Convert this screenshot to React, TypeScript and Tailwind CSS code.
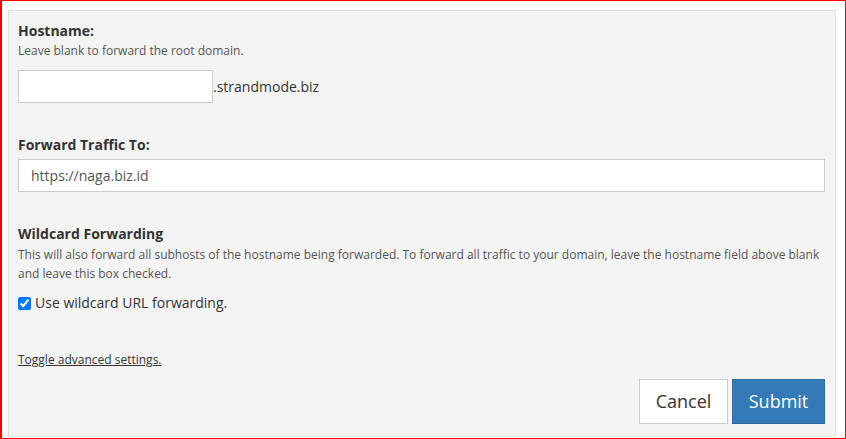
import React from 'react';

const App: React.FC = () => {
  return (
    <div className="w-[846px] h-[439px] bg-white border border-l-2 border-[#ff0000] pl-[6px] pr-[9px] pt-[9px] pb-[1px] font-['Open_Sans',sans-serif] text-[#333]">
      <div className="h-full bg-[#f4f4f4] border border-[#e2e2e2] pl-[9px] pr-[10px] pt-[10px] flex flex-col">
        <div className="text-[14px] font-bold leading-[20px] text-[#333]">Hostname:</div>
        <div className="text-[12px] leading-[17px] text-[#555] mt-[1px]">Leave blank to forward the root domain.</div>
        <div className="flex items-center mt-[11px]">
          <input type="text" className="w-[195px] h-[33px] bg-white border border-[#ccc] outline-none" />
          <span className="text-[14px] text-[#333]">.strandmode.biz</span>
        </div>

        <div className="text-[14px] font-bold leading-[20px] mt-[32px]">Forward Traffic To:</div>
        <input
          type="text"
          defaultValue="https://naga.biz.id"
          className="mt-[4px] w-full h-[33px] bg-white border border-[#ccc] px-[12px] text-[14px] text-[#555] outline-none"
        />

        <div className="text-[14px] font-bold leading-[20px] mt-[32px]">Wildcard Forwarding</div>
        <p className="text-[12px] leading-[19px] text-[#555] mt-[1px] pr-[4px]">
          This will also forward all subhosts of the hostname being forwarded. To forward all traffic to your domain, leave the hostname field above blank and leave this box checked.
        </p>
        <label className="flex items-center gap-[4px] mt-[10px] text-[14px] leading-[20px]">
          <input type="checkbox" defaultChecked className="w-[13px] h-[13px] m-0 accent-[#0075ff]" />
          <span>Use wildcard URL forwarding.</span>
        </label>

        <a href="#" className="mt-[38px] text-[12px] leading-[17px] text-[#333] underline w-fit">Toggle advanced settings.</a>

        <div className="flex justify-end gap-[4px] mt-[11px]">
          <button className="h-[45px] w-[89px] bg-white border border-[#ccc] text-[18px] text-[#333]">Cancel</button>
          <button className="h-[45px] w-[93px] bg-[#337ab7] border border-[#2e6da4] text-[18px] text-white">Submit</button>
        </div>
      </div>
    </div>
  );
};

export default App;
